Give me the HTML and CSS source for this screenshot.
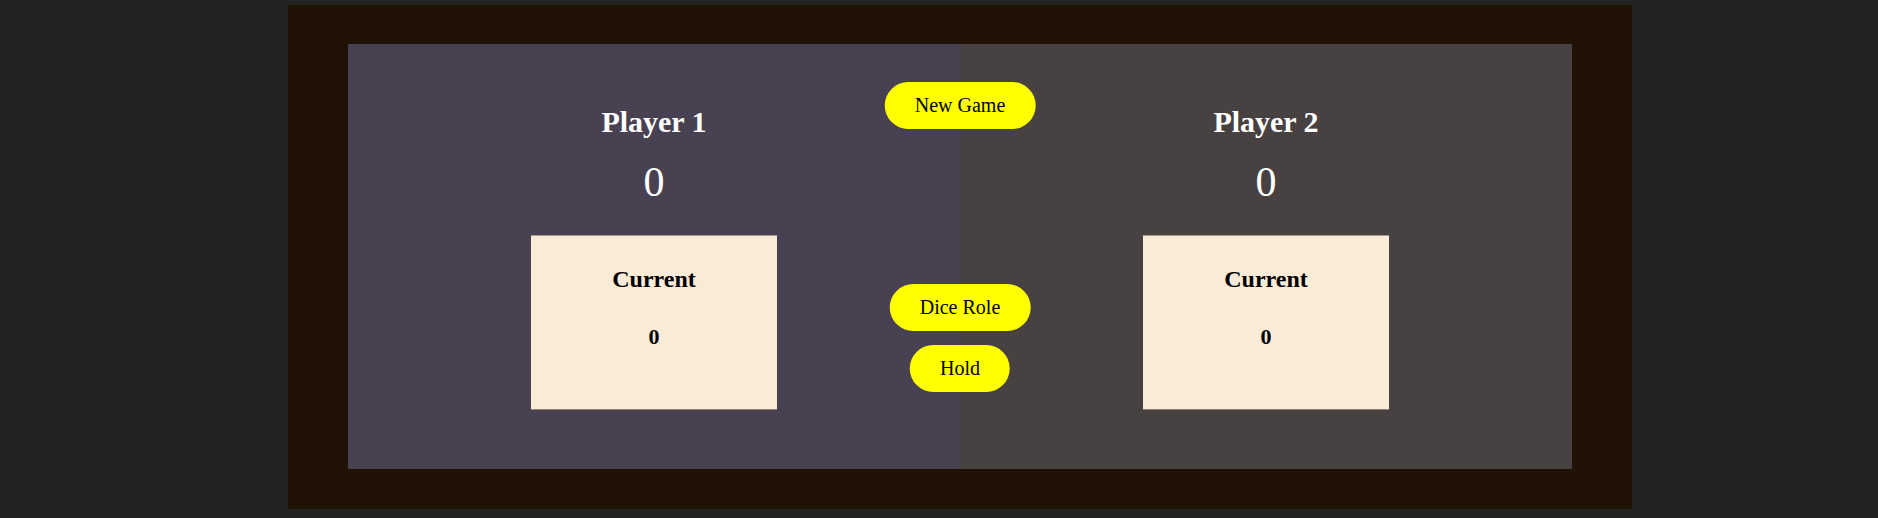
FILE: index.html
```html
<!DOCTYPE html>
<html lang="en">
<head>
<meta charset="utf-8">
<title>Pig Game</title>
<link rel="stylesheet" href="styles.css">
</head>
<body>
<main class="game">
  <div class="board">
    <section class="player player--one">
      <h1 class="player-name">Player 1</h1>
      <p class="player-score">0</p>
      <div class="current">
        <h2 class="current-label">Current</h2>
        <p class="current-score">0</p>
      </div>
    </section>
    <section class="player player--two">
      <h1 class="player-name">Player 2</h1>
      <p class="player-score">0</p>
      <div class="current">
        <h2 class="current-label">Current</h2>
        <p class="current-score">0</p>
      </div>
    </section>
    <div class="controls">
      <button class="btn btn--new">New Game</button>
      <div class="actions">
        <button class="btn">Dice Role</button>
        <button class="btn">Hold</button>
      </div>
    </div>
  </div>
</main>
</body>
</html>
```

FILE: styles.css
```css
* { box-sizing: border-box; }

html, body {
  margin: 0;
  padding: 0;
}

body {
  background: #222222;
  font-family: "Liberation Serif", "Times New Roman", serif;
  height: 518px;
  overflow: hidden;
}

.game {
  margin: 5px 0 0 288px;
  width: 1344px;
  height: 504px;
  padding: 39px 60px 40px 60px;
  background: #211206;
}

.board {
  position: relative;
  display: flex;
  height: 425px;
}

.player {
  flex: 1;
  display: flex;
  flex-direction: column;
  align-items: center;
  padding-top: 60px;
}

.player--one { background: #484152; }
.player--two { background: #474141; }

.player-name {
  margin: 0;
  font-size: 30px;
  line-height: 36px;
  font-weight: bold;
  color: #ffffff;
}

.player-score {
  margin: 18px 0 0 0;
  font-size: 42px;
  line-height: 48px;
  color: #ffffff;
}

.current {
  margin-top: 29px;
  width: 246px;
  height: 175px;
  background: #faebd7;
  border-top: 1px solid #a79a8e;
  border-bottom: 1px solid #8f8478;
  display: flex;
  flex-direction: column;
  align-items: center;
  padding-top: 29px;
  color: #000000;
}

.current-label {
  margin: 0;
  font-size: 24px;
  line-height: 28px;
  font-weight: bold;
}

.current-score {
  margin: 31px 0 0 0;
  font-size: 22px;
  line-height: 26px;
  font-weight: bold;
}

.controls {
  position: absolute;
  top: 38px;
  left: 50%;
  transform: translateX(-50%);
  display: flex;
  flex-direction: column;
  align-items: center;
}

.actions {
  margin-top: 155px;
  display: flex;
  flex-direction: column;
  align-items: center;
  gap: 14px;
}

.btn {
  font-family: "Liberation Serif", "Times New Roman", serif;
  font-size: 20px;
  line-height: 23px;
  padding: 12px 30px;
  border: none;
  border-radius: 24px;
  background: #ffff00;
  color: #000000;
  white-space: nowrap;
}
```
